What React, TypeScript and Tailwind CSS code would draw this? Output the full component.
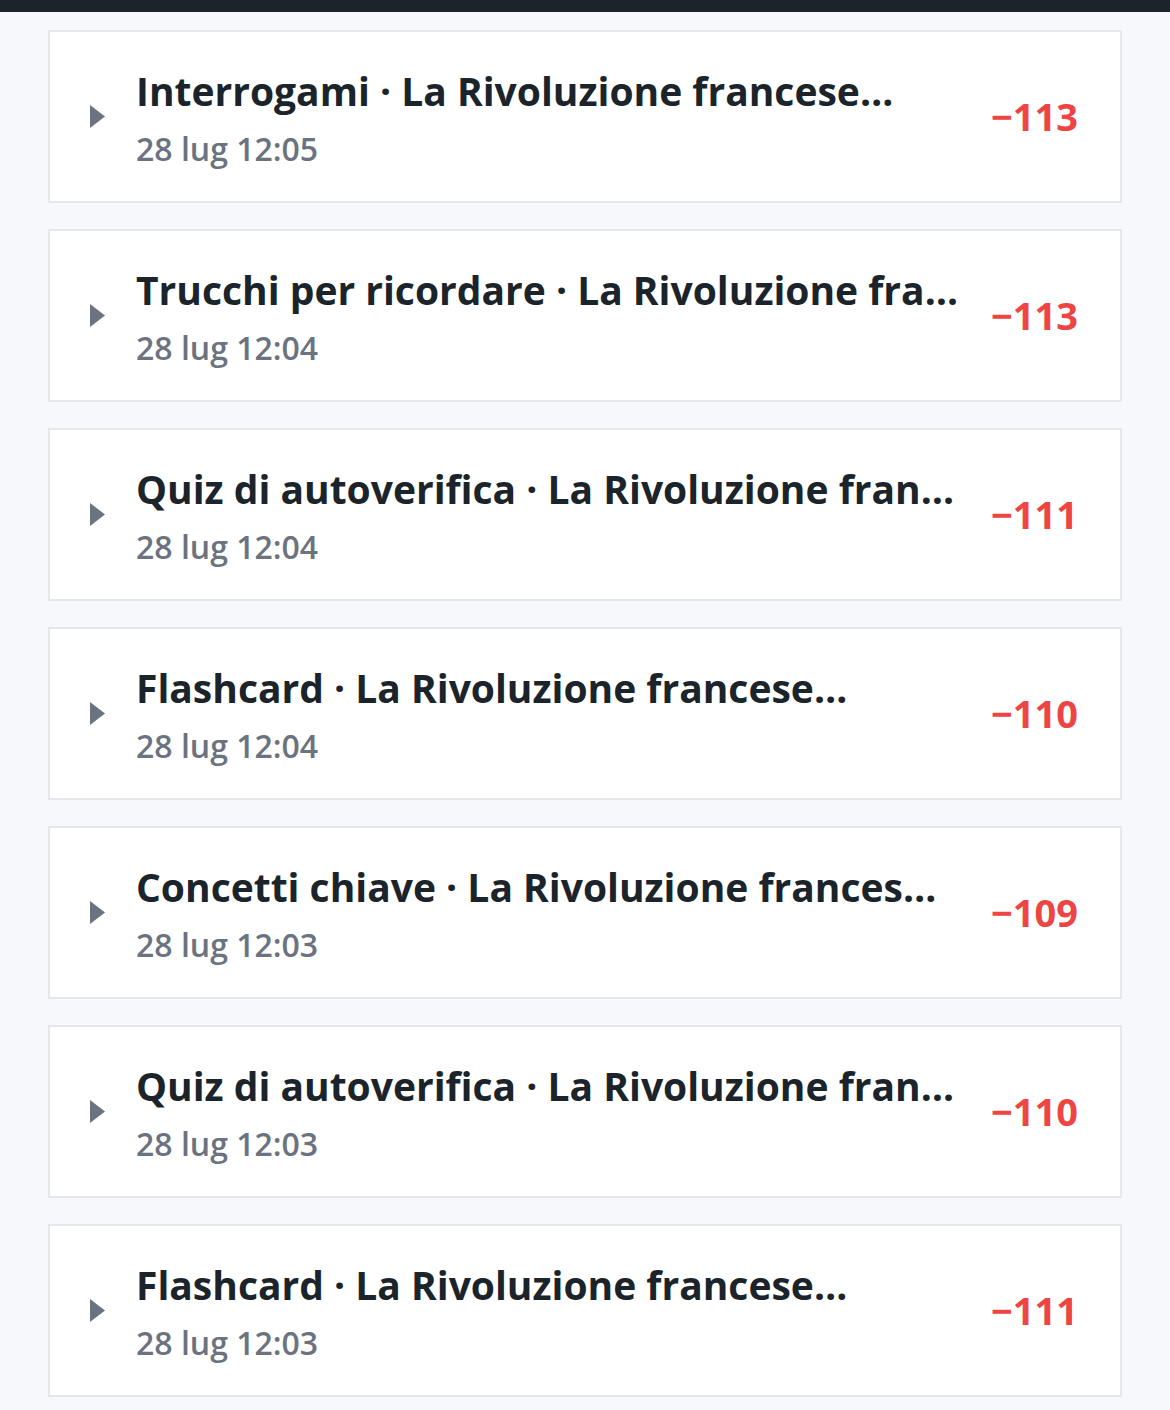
const ITEMS = [
  { title: "Interrogami · La Rivoluzione francese…", date: "28 lug 12:05", amount: "−113" },
  { title: "Trucchi per ricordare · La Rivoluzione fra…", date: "28 lug 12:04", amount: "−113" },
  { title: "Quiz di autoverifica · La Rivoluzione fran…", date: "28 lug 12:04", amount: "−111" },
  { title: "Flashcard · La Rivoluzione francese…", date: "28 lug 12:04", amount: "−110" },
  { title: "Concetti chiave · La Rivoluzione frances…", date: "28 lug 12:03", amount: "−109" },
  { title: "Quiz di autoverifica · La Rivoluzione fran…", date: "28 lug 12:03", amount: "−110" },
  { title: "Flashcard · La Rivoluzione francese…", date: "28 lug 12:03", amount: "−111" },
];

function Caret() {
  return (
    <svg width="15" height="23" viewBox="0 0 15 23" className="shrink-0">
      <path d="M0 0 L15 11.5 L0 23 Z" fill="#6b7280" />
    </svg>
  );
}

export default function App() {
  return (
    <div className="min-h-screen bg-[#f7f8fc] font-['Open_Sans',sans-serif]">
      {/* header edge */}
      <div className="h-3 bg-[#1b242a]" />

      <div className="flex flex-col gap-[26px] px-12 pt-[18px] pb-3">
        {ITEMS.map((it, i) => (
          <div
            key={i}
            className="flex h-[173px] items-center border-2 border-[#e5e7eb] bg-white pl-10 pr-[42px]"
          >
            <Caret />
            <div className="ml-[31px] min-w-0 flex-1 pt-[2px]">
              <div className="truncate text-[39px] font-bold leading-[56px] text-[#1b242a]">
                {it.title}
              </div>
              <div className="mt-[6px] text-[32px] font-semibold leading-[48px] text-[#6b7280]">
                {it.date}
              </div>
            </div>
            <div className="ml-6 shrink-0 text-[38px] font-bold text-[#ef4444]">
              {it.amount}
            </div>
          </div>
        ))}
      </div>
    </div>
  );
}
